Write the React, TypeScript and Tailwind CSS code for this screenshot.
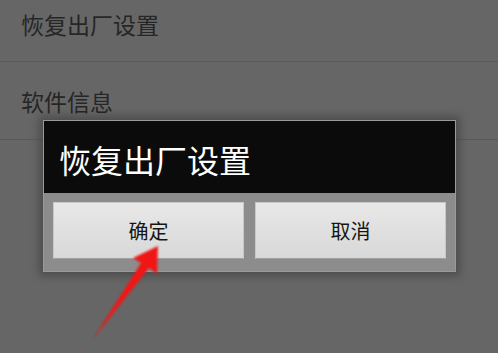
export default function App() {
  return (
    <div
      className="relative w-[498px] h-[353px] overflow-hidden bg-[#666666]"
      style={{ fontFamily: '"Noto Sans CJK SC", "Noto Sans", sans-serif' }}
    >
      <div className="h-[62px] border-b border-[#5a5a5a] px-[21px] pt-[10px] text-[23px] leading-[28px] text-[#262626]">
        恢复出厂设置
      </div>
      <div className="h-[78px] border-b border-[#5a5a5a] px-[21px] flex items-center text-[23px] leading-[28px] text-[#262626]">
        软件信息
      </div>

      <div className="absolute left-[43px] top-[120px] w-[413px] h-[152px] border border-[#9a9a9a] bg-[#8c8c8c] shadow-[0_0_8px_4px_rgba(0,0,0,0.25)] flex flex-col">
        <div className="h-[72px] bg-[#0b0b0b] pl-[15px] pt-[20px] text-[32px] leading-[36px] text-white">
          恢复出厂设置
        </div>
        <div className="flex-1 flex gap-[11px] pl-[9px] pr-[9px] pt-[9px]">
          <div className="w-[191px] h-[57px] flex items-center justify-center bg-gradient-to-b from-[#e8e8e8] to-[#d8d8d8] border border-[#c8c8c8] border-b-[#a0a0a0] text-[20px] text-[#151515]">
            确定
          </div>
          <div className="w-[191px] h-[57px] flex items-center justify-center bg-gradient-to-b from-[#e8e8e8] to-[#d8d8d8] border border-[#c8c8c8] border-b-[#a0a0a0] text-[20px] text-[#151515]">
            取消
          </div>
        </div>
      </div>

      <svg className="absolute left-0 top-0" width="498" height="353" viewBox="0 0 498 353">
        <defs>
          <filter id="b" x="-20%" y="-20%" width="140%" height="140%">
            <feGaussianBlur stdDeviation="0.8" />
          </filter>
        </defs>
        <polygon
          points="93,339 141,263 133,258 158,246 157,274 149,268"
          fill="#f01818"
          filter="url(#b)"
        />
      </svg>
    </div>
  );
}
